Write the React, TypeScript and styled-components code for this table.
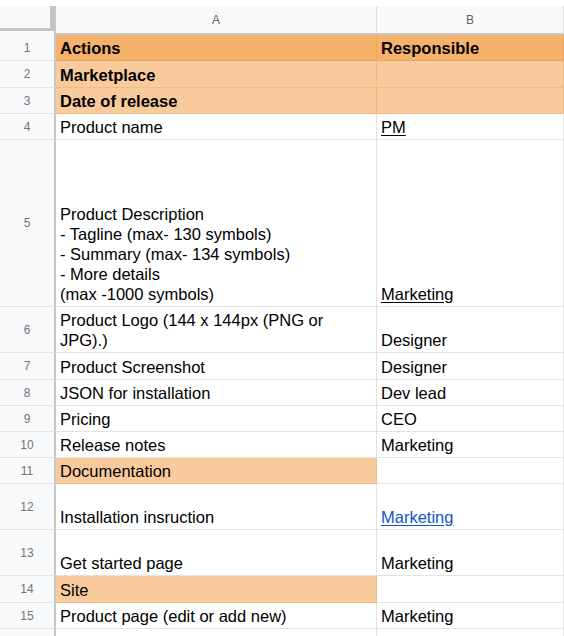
import React from 'react';
import styled, { createGlobalStyle } from 'styled-components';

const Global = createGlobalStyle`
  html, body { margin: 0; padding: 0; background: #ffffff; }
  body { font-family: "Liberation Sans", Arial, sans-serif; overflow: hidden; }
`;

const Sheet = styled.div`
  width: 564px;
  height: 636px;
  padding-top: 6px;
  box-sizing: border-box;
  overflow: hidden;
  background: #ffffff;
`;

const Grid = styled.div`
  display: grid;
  grid-template-columns: 56px 321px 187px;
`;

const Corner = styled.div`
  height: 29px;
  background: #f8f9fa;
  border-right: 2px solid #c7c7c7;
  box-sizing: border-box;
`;

const CornerBox = styled.div`
  width: 54px;
  height: 25px;
  background: #f8f9fa;
  box-shadow: inset -4px -3px 0 #c4c4c4;
`;

const ColHead = styled.div`
  height: 29px;
  box-sizing: border-box;
  background: #f8f9fa;
  border-right: 1px solid #e0e0e0;
  border-bottom: 2px solid #c7c7c7;
  display: flex;
  align-items: center;
  justify-content: center;
  font-size: 12px;
  color: #5f6368;
`;

const RowNum = styled.div<{ $h: number }>`
  height: ${(p) => p.$h}px;
  box-sizing: border-box;
  background: #f8f9fa;
  border-right: 2px solid #c7c7c7;
  border-bottom: 1px solid #e2e2e2;
  display: flex;
  align-items: center;
  justify-content: center;
  font-size: 12px;
  color: #70757a;
`;

const Cell = styled.div<{ $h: number; $fill?: string; $bold?: boolean }>`
  height: ${(p) => p.$h}px;
  box-sizing: border-box;
  background: ${(p) => p.$fill || '#ffffff'};
  border-right: 1px solid ${(p) => (p.$fill ? 'rgba(180,120,60,0.18)' : '#e2e2e2')};
  border-bottom: 1px solid ${(p) => (p.$fill ? 'rgba(180,120,60,0.18)' : '#e2e2e2')};
  display: flex;
  align-items: flex-end;
  padding: 0 5px 2px 4px;
  font-size: 16.5px;
  line-height: 20px;
  font-weight: ${(p) => (p.$bold ? 700 : 400)};
  color: #000000;
  white-space: pre-line;
  overflow: hidden;
`;

const Underlined = styled.span<{ $link?: boolean }>`
  text-decoration: underline;
  text-underline-offset: 2px;
  color: ${(p) => (p.$link ? '#1155cc' : '#000000')};
`;

type Row = {
  n: number | string;
  h: number;
  a?: string;
  b?: React.ReactNode;
  fillA?: string;
  fillB?: string;
  bold?: boolean;
};

const O1 = '#f6b26b';
const O2 = '#f9cb9c';

const rows: Row[] = [
  { n: 1, h: 26, a: 'Actions', b: 'Responsible', fillA: O1, fillB: O1, bold: true },
  { n: 2, h: 27, a: 'Marketplace', fillA: O2, fillB: O2, bold: true },
  { n: 3, h: 26, a: 'Date of release', fillA: O2, fillB: O2, bold: true },
  { n: 4, h: 26, a: 'Product name', b: <Underlined>PM</Underlined> },
  {
    n: 5,
    h: 167,
    a: 'Product Description\n- Tagline (max- 130 symbols)\n- Summary (max- 134 symbols)\n- More details\n(max -1000 symbols)',
    b: <Underlined>Marketing</Underlined>,
  },
  { n: 6, h: 46, a: 'Product Logo (144 x 144px (PNG or\nJPG).)', b: 'Designer' },
  { n: 7, h: 27, a: 'Product Screenshot', b: 'Designer' },
  { n: 8, h: 26, a: 'JSON for installation', b: 'Dev lead' },
  { n: 9, h: 26, a: 'Pricing', b: 'CEO' },
  { n: 10, h: 26, a: 'Release notes', b: 'Marketing' },
  { n: 11, h: 26, a: 'Documentation', fillA: O2 },
  { n: 12, h: 46, a: 'Installation insruction', b: <Underlined $link>Marketing</Underlined> },
  { n: 13, h: 46, a: 'Get started page', b: 'Marketing' },
  { n: 14, h: 27, a: 'Site', fillA: O2 },
  { n: 15, h: 26, a: 'Product page (edit or add new)', b: 'Marketing' },
  { n: '', h: 26 },
];

export default function App() {
  return (
    <>
      <Global />
      <Sheet>
        <Grid>
          <Corner>
            <CornerBox />
          </Corner>
          <ColHead>A</ColHead>
          <ColHead>B</ColHead>
          {rows.map((r, i) => (
            <React.Fragment key={i}>
              <RowNum $h={r.h}>{r.n}</RowNum>
              <Cell $h={r.h} $fill={r.fillA} $bold={r.bold}>
                {r.a}
              </Cell>
              <Cell $h={r.h} $fill={r.fillB} $bold={r.bold}>
                {r.b}
              </Cell>
            </React.Fragment>
          ))}
        </Grid>
      </Sheet>
    </>
  );
}
